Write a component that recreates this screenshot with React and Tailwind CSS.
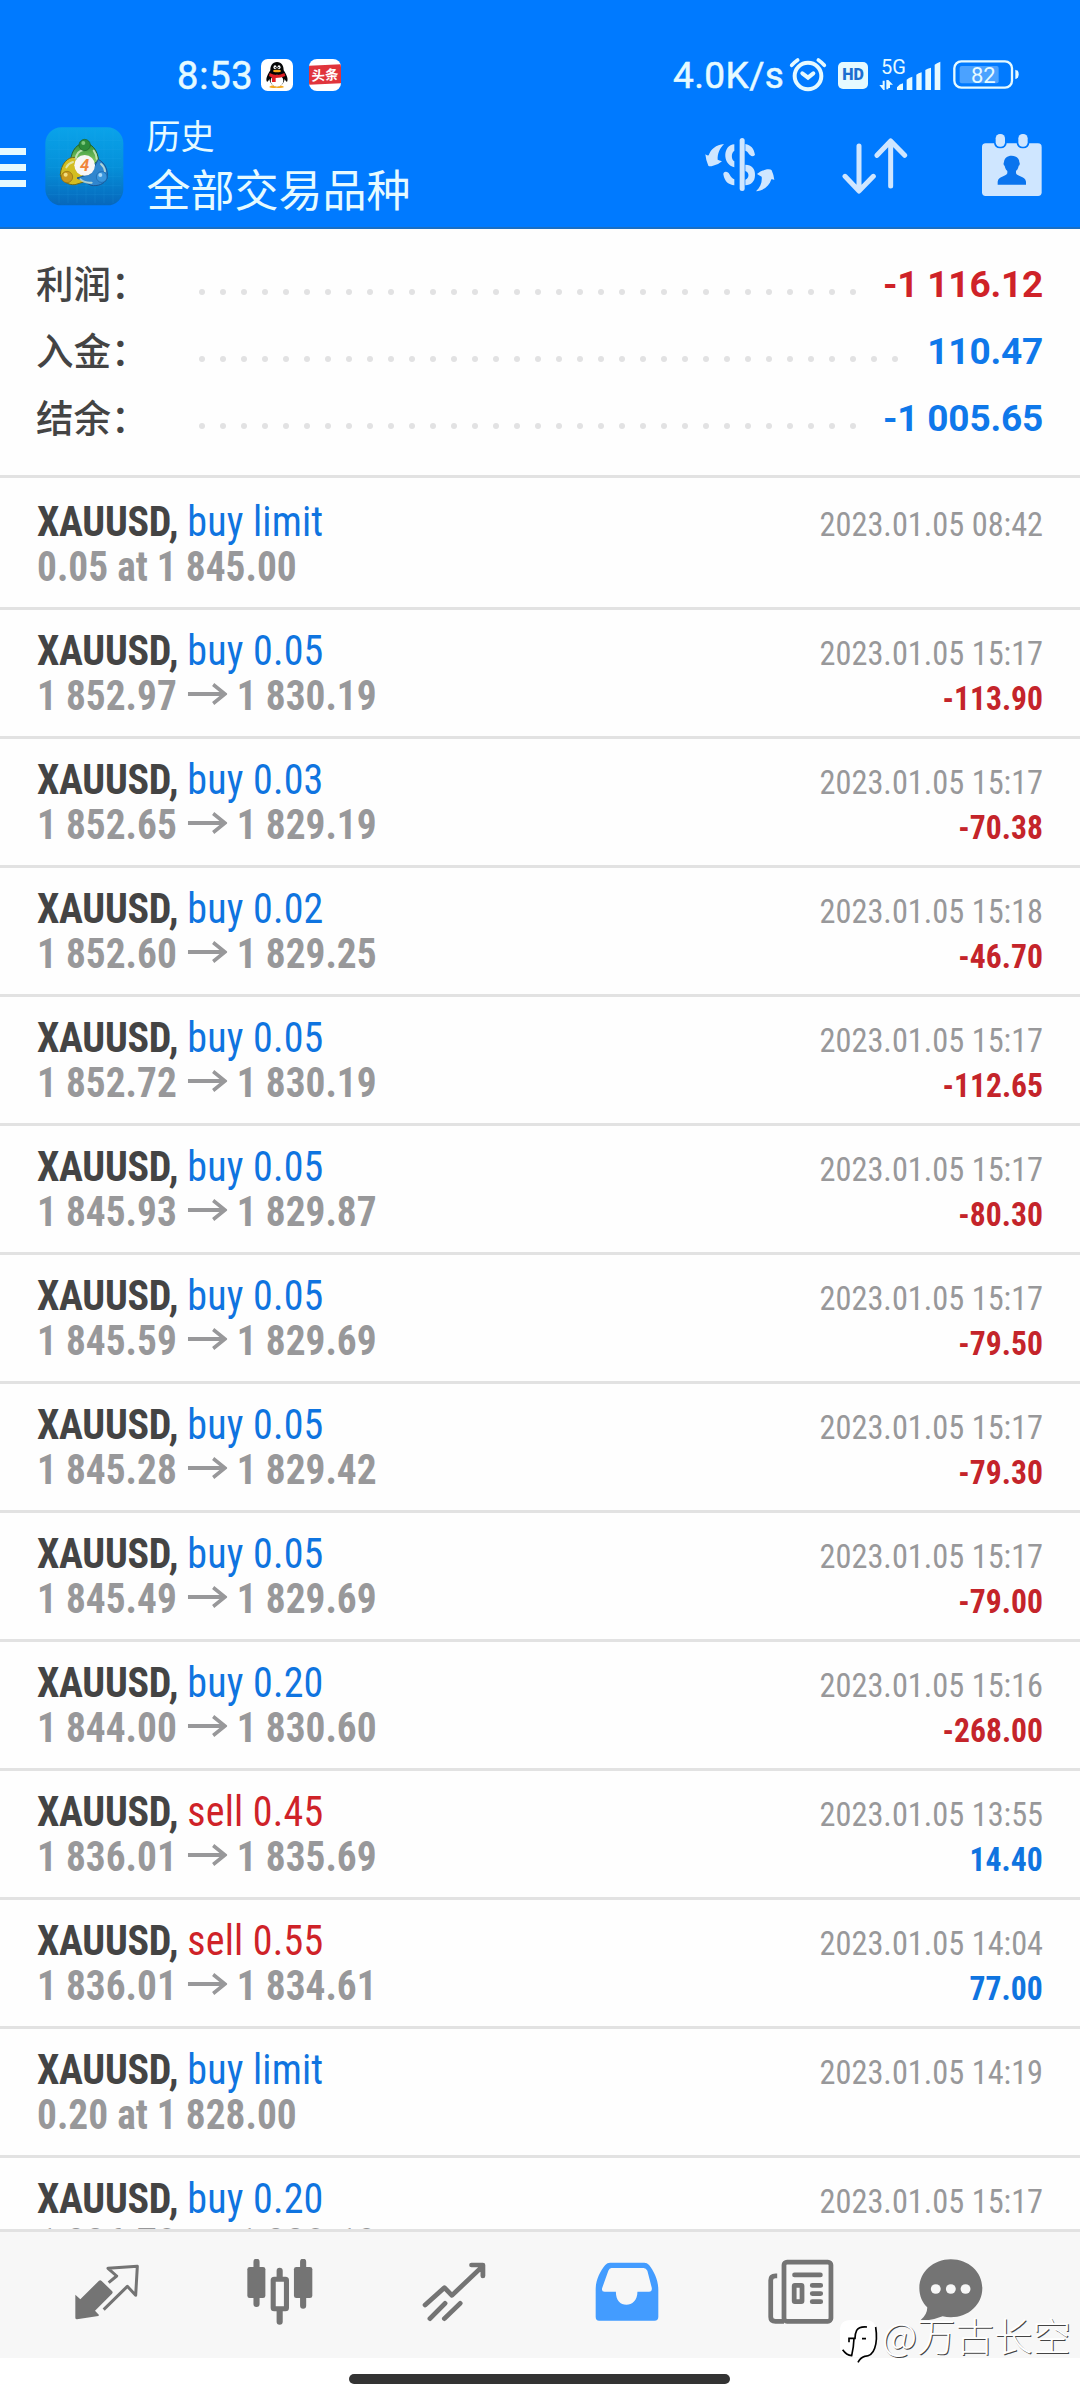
const RESUMEN = [
  { label: '利润', value: '-1 116.12', color: 'text-[#cf2228]', dots: 32 },
  { label: '入金', value: '110.47', color: 'text-[#0f78ea]', dots: 34 },
  { label: '结余', value: '-1 005.65', color: 'text-[#0f78ea]', dots: 32 },
];

const ORDERS = [
  { side: 'buy', size: 'limit', pending: '0.05 at 1 845.00', date: '2023.01.05 08:42' },
  { side: 'buy', size: '0.05', open: '1 852.97', close: '1 830.19', date: '2023.01.05 15:17', profit: '-113.90' },
  { side: 'buy', size: '0.03', open: '1 852.65', close: '1 829.19', date: '2023.01.05 15:17', profit: '-70.38' },
  { side: 'buy', size: '0.02', open: '1 852.60', close: '1 829.25', date: '2023.01.05 15:18', profit: '-46.70' },
  { side: 'buy', size: '0.05', open: '1 852.72', close: '1 830.19', date: '2023.01.05 15:17', profit: '-112.65' },
  { side: 'buy', size: '0.05', open: '1 845.93', close: '1 829.87', date: '2023.01.05 15:17', profit: '-80.30' },
  { side: 'buy', size: '0.05', open: '1 845.59', close: '1 829.69', date: '2023.01.05 15:17', profit: '-79.50' },
  { side: 'buy', size: '0.05', open: '1 845.28', close: '1 829.42', date: '2023.01.05 15:17', profit: '-79.30' },
  { side: 'buy', size: '0.05', open: '1 845.49', close: '1 829.69', date: '2023.01.05 15:17', profit: '-79.00' },
  { side: 'buy', size: '0.20', open: '1 844.00', close: '1 830.60', date: '2023.01.05 15:16', profit: '-268.00' },
  { side: 'sell', size: '0.45', open: '1 836.01', close: '1 835.69', date: '2023.01.05 13:55', profit: '14.40' },
  { side: 'sell', size: '0.55', open: '1 836.01', close: '1 834.61', date: '2023.01.05 14:04', profit: '77.00' },
  { side: 'buy', size: 'limit', pending: '0.20 at 1 828.00', date: '2023.01.05 14:19' },
  { side: 'buy', size: '0.20', open: '1 836.79', close: '1 830.19', date: '2023.01.05 15:17' },
];

// STATUS BAR
function QQIcon() {
  return (
    <svg width="32" height="32" viewBox="0 0 96 96">
      <rect width="96" height="96" rx="20" fill="#fff" />
      <path d="M24 84q10-8 22-3q12-5 24 3q-10 5-24 2q-14 3-22-2z" fill="#f5a81c" />
      <path d="M48 9C34 9 28 20 28 34c-8 12-14 24-11 33 2 3 6-2 8-7 2 12 10 22 23 22s21-10 23-22c2 5 6 10 8 7 3-9-3-21-11-33C68 20 62 9 48 9z" fill="#050505" />
      <ellipse cx="48" cy="65" rx="19" ry="18" fill="#fff" />
      <ellipse cx="42" cy="25" rx="4.500" ry="6" fill="#fff" />
      <ellipse cx="54" cy="25" rx="4.500" ry="6" fill="#fff" />
      <circle cx="43" cy="26" r="2" />
      <circle cx="53" cy="26" r="2" />
      <ellipse cx="48" cy="36" rx="12" ry="4" fill="#f5a81c" />
      <path d="M26 42q22 12 44 0l3 9q-12 6-29 6v12h-11V55q-6-2-9-4z" fill="#e01f26" />
    </svg>
  );
}

function ToutiaoIcon() {
  return (
    <div className="flex h-8 w-8 flex-col items-stretch justify-center overflow-hidden rounded-lg bg-white">
      <div className="-mt-px flex h-[19px] -skew-y-3 items-center justify-center bg-[#e0343c] font-['Noto_Sans_CJK_SC',sans-serif] text-[13.500px] leading-none font-bold text-white">头条</div>
    </div>
  );
}

function StatusBar() {
  return (
    <div className="flex h-[56px] items-center pl-[177px] font-['Roboto',sans-serif] text-[#e6faff]">
      <span className="mt-[2px] w-[84px] text-[38px] leading-[56px] tracking-[0.8px] [-webkit-text-stroke:0.5px_currentColor]">8:53</span>
      <QQIcon />
      <span className="w-4" />
      <ToutiaoIcon />
      <span className="mt-[2px] ml-[332px] w-[116px] text-[37px] leading-[56px] tracking-[0.4px] [-webkit-text-stroke:0.5px_currentColor]">4.0K/s</span>
      <svg width="38" height="36" viewBox="447 50 114 108" fill="none" stroke="currentColor" strokeWidth="12" strokeLinecap="round">
        <circle cx="504" cy="107" r="40" />
        <path d="M487 99l17 13 16-13" />
        <path d="M455 75q8-9 18-16M535 59q10 7 18 16" strokeWidth="11" />
      </svg>
      <span className="ml-[11px] flex h-[27px] w-[30px] items-center justify-center rounded-[5px] bg-current text-[16px] leading-none font-black">
        <span className="text-[#1d6fd0]">HD</span>
      </span>
      <div className="ml-[11px] flex h-[36px] w-[62px] flex-col">
        <span className="ml-[2px] text-[20px] leading-[20px]">5G</span>
        <svg className="-mt-[16px]" width="62" height="30" viewBox="716 60 186 90" fill="currentColor">
          <path d="M727 119h6v28h-4l-12-15h10zM738 117h6v28h-6zM744 117l14 14h-9v10h-7z" />
          <path d="M770 147v-8q8-10 18-12v20zM799 147v-31q6-6 17-9v40zM828 147v-46q6-4 16-7v53zM855 147V87q6-4 17-7v67zM883 147V71q6-5 17-9v85z" />
        </svg>
      </div>
      <svg className="ml-[12px]" width="66" height="30" viewBox="940 60 198 90" fill="none">
        <rect x="944" y="64" width="173" height="79" rx="21" stroke="currentColor" strokeWidth="7" />
        <rect x="960" y="78" width="117" height="52" rx="6" fill="#4ba2ff" />
        <path d="M1127 89q10 2 10 14t-10 14z" fill="currentColor" />
        <text x="1031" y="128" textAnchor="middle" fill="#e6faff" fontFamily="Roboto" fontWeight="400" fontSize="66">82</text>
      </svg>
    </div>
  );
}

// APP HEADER
function AppLogo() {
  return (
    <svg width="79" height="79" viewBox="28 21 237 237">
      <defs>
        <linearGradient id="bg" x1="0" y1="0" x2="0" y2="1">
          <stop offset="0" stopColor="#0aa3ea" />
          <stop offset="0.5" stopColor="#0591da" />
          <stop offset="1" stopColor="#0767bb" />
        </linearGradient>
        <linearGradient id="green" x1="0" y1="0" x2="0" y2="1">
          <stop offset="0" stopColor="#2f8f38" />
          <stop offset="1" stopColor="#8fd06a" />
        </linearGradient>
      </defs>
      <rect x="29" y="22" width="234" height="234" rx="48" fill="url(#bg)" />
      <path d="M70 30v220M97 30v220M124 30v220M151 30v220M178 30v220M205 30v220M232 30v220M36 62h220M36 89h220M36 116h220M36 143h220M36 170h220M36 197h220M36 224h220" stroke="#38b4f0" strokeOpacity="0.200" strokeWidth="2" />
      <path d="M105 122C108 88 126 70 147 70s38 18 42 52l-18 12-50 0z" fill="url(#green)" stroke="#24602c" strokeWidth="3" />
      <path d="M118 112C96 110 76 132 74 164c4 20 24 32 44 30l26-8-4-26z" fill="#d3bd22" stroke="#6d6a1a" strokeWidth="3" />
      <path d="M188 118c22 12 30 34 26 58-8 16-28 24-48 20l-42-22 40-12z" fill="#2f86cf" stroke="#1a5592" strokeWidth="3" />
      <path d="M120 116q4-22 22-26M92 142q6-12 20-16M196 132q10 8 12 22M134 178q14 12 34 10M174 92q8 10 9 24" stroke="#e6f5d8" strokeOpacity="0.700" strokeWidth="6" fill="none" strokeLinecap="round" />
      <circle cx="147" cy="75" r="17" fill="#2c8c3a" stroke="#1d6428" strokeWidth="2" />
      <circle cx="94" cy="171" r="17" fill="#c99a1e" stroke="#8d6c14" strokeWidth="2" />
      <circle cx="198" cy="171" r="16" fill="#3a96dc" stroke="#1a62a8" strokeWidth="2" />
      <circle cx="143" cy="69" r="6" fill="#7cc77a" />
      <circle cx="90" cy="164" r="6" fill="#f2de80" />
      <circle cx="194" cy="165" r="6" fill="#a5d8fa" />
      <circle cx="147" cy="136" r="31" fill="#f8f6f6" />
      <text x="147" y="153" textAnchor="middle" fontFamily="Roboto" fontWeight="700" fontStyle="italic" fontSize="50" fill="#f0853a">4</text>
    </svg>
  );
}

function Toolbar() {
  return (
    <div className="flex h-[124px] items-start">
      <div className="mt-[45px] flex w-[26px] flex-col gap-[9px]">
        <span className="h-[7px] bg-[#e6faff]" />
        <span className="h-[7px] bg-[#e6faff]" />
        <span className="h-[7px] bg-[#e6faff]" />
      </div>
      <div className="mt-[24px] ml-[18.500px]">
        <AppLogo />
      </div>
      <div className="ml-[23px] flex flex-col font-['Noto_Sans_CJK_SC',sans-serif] text-[#e6faff]">
        <span className="mt-[12px] text-[34px] leading-[40px]">历史</span>
        <span className="mt-[8px] text-[44px] leading-[50px]">全部交易品种</span>
      </div>
      {/* reverse, sort, period */}
      <div className="mt-[30px] mr-[37px] ml-auto flex items-start text-[#cfe6ff]">
        <svg className="mt-[4px]" width="70" height="56" viewBox="196 290 210 168" fill="currentColor">
          <path d="M284 312C250 313 246 372 284 381V363C274 357 274 337 284 331Z" />
          <path d="M317 311C333 314 343 324 346 344q-8 7-14 1C326 341 325 333 317 331Z" />
          <path d="M251 402c4 23 16 31 33 33v-18c-10-4-12-12-17-19-8-6-16-4-16 4z" />
          <path d="M317 373c20 0 30 13 29 31 0 20-12 30-29 31v-17c12-4 13-22 0-26z" />
          <rect x="300" y="293" width="15" height="159" rx="7.500" />
          <path d="M253 311c-24 2-40 16-46 34q-6 1-10-3 2 20 9 34 4 4 14 0 17-3 27-13-8-3-13-5c-1-18 6-34 19-47z" />
          <path d="M349 453c24-3 40-16 46-36q5-1 9 2-2-16-8-29-4-5-14-3-16 3-30 14 8 5 14 8c2 16-4 32-17 44z" />
        </svg>
        <svg className="mt-[4px] ml-[67px]" width="66" height="58" viewBox="609 290 198 174" fill="none" stroke="currentColor" strokeWidth="15" strokeLinecap="round" strokeLinejoin="round">
          <path d="M660 317v134M618 408l42 44 43-44" />
          <path d="M755 437V302M714 345l41-43 42 43" />
        </svg>
        <svg className="ml-[73px]" width="62" height="64" viewBox="1024 279 186 192" fill="currentColor">
          <rect x="1027" y="310" width="179" height="158" rx="11" />
          <rect x="1063" y="276" width="38" height="49" rx="17" fill="#007aff" />
          <rect x="1131" y="276" width="38" height="49" rx="17" fill="#007aff" />
          <rect x="1068" y="282" width="28" height="38" rx="13" />
          <rect x="1136" y="282" width="28" height="38" rx="13" />
          <path d="M1074 434v-9c2-16 24-14 29-25v-7c-6-5-7-12-8-16-4-2-4-8-2-10 0-12 10-20 23-20s23 8 23 20c2 2 2 8-2 10-1 4-2 11-8 16v7c5 11 28 9 30 25v9z" fill="#0a74ee" />
        </svg>
      </div>
    </div>
  );
}

function Resumen() {
  return (
    <div className="flex h-[246px] shrink-0 flex-col pt-[23px]">
      {RESUMEN.map((r) => (
        <div key={r.label} className="flex h-[67px] pr-[37px] pl-[36px]">
          <span className="w-[163px] font-['Noto_Sans_CJK_SC',sans-serif] text-[37.500px] leading-[60px] font-medium text-[#444]">{r.label}：</span>
          <div className="mt-[37px] flex gap-[15px]">
            {Array.from({ length: r.dots }, (_, i) => (
              <span key={i} className="h-[6px] w-[6px] rounded-full bg-[#e2e2e3]" />
            ))}
          </div>
          <span className={`ml-auto font-['Roboto',sans-serif] text-[37px] leading-[66px] font-bold tracking-[-0.2px] ${r.color}`}>{r.value}</span>
        </div>
      ))}
    </div>
  );
}

function Arrow() {
  return (
    <svg className="mr-[10px] mb-[5px] ml-[12px] inline-block align-baseline" width="42" height="22" viewBox="0 0 42 22" fill="none" stroke="currentColor" strokeWidth="3.800">
      <path d="M0 11h39M27 1.500L39.500 11L27 20.500" />
    </svg>
  );
}

function OrderRow({ order, first }) {
  return (
    <div className={`${first ? 'h-[132px] pt-[20.500px]' : 'h-[129px] pt-[17.500px]'} shrink-0 border-t-[3px] border-[#e2e2e2] px-[37px] font-['Roboto_Condensed',sans-serif] text-[42px] leading-[45px]`}>
      <div className="flex h-[45px] items-baseline justify-between">
        <span className="origin-left scale-x-[0.952]">
          <span className="font-bold tracking-[-0.3px] text-[#444]">XAUUSD,</span>{' '}
          <span className={`tracking-[0.2px] ${order.side === 'buy' ? 'text-[#0f74e0]' : 'text-[#cf2228]'}`}>{order.side} {order.size}</span>
        </span>
        <span className="origin-right scale-x-[0.951] text-[34px] text-[#98989a]">{order.date}</span>
      </div>
      <div className="flex h-[45px] items-baseline justify-between">
        <span className="origin-left scale-x-[0.937] font-bold whitespace-nowrap text-[#98989a]">
          {order.pending || (
            <>
              {order.open}
              <Arrow />
              {order.close}
            </>
          )}
        </span>
        {order.profit && (
          <span className={`origin-right scale-x-[0.930] text-[34px] font-bold ${order.profit.startsWith('-') ? 'text-[#c4242a]' : 'text-[#0f74e0]'}`}>{order.profit}</span>
        )}
      </div>
    </div>
  );
}

// BOTTOM NAVIGATION
function BottomNav() {
  return (
    <div className="flex h-[129px] shrink-0 border-t-[3px] border-[#e2e2e2] bg-[#f7f7f7] pt-[26px] pl-[21px] text-[#747474]">
      <div className="flex w-[172px] justify-center">
        <svg className="mt-[6px]" width="64" height="56" viewBox="48 46 192 168" fill="none" stroke="currentColor" strokeWidth="9">
          <path d="M49 138l15 14 56-56q4-3 8 1l31 30q4 4 0 8l-51 51 12 13-2 3-64 10q-5 0-5-5z" fill="currentColor" stroke="none" />
          <path d="M149 102l24-20-26-23 88-6-5 87-25-27-71 70" strokeLinejoin="round" />
        </svg>
      </div>
      <div className="flex w-[174px] justify-center">
        <svg className="mt-[1px]" width="66" height="66" viewBox="717 360 194 198" preserveAspectRatio="none" fill="currentColor">
          <path d="M745 368v127M882 368v132M813 395v30M813 510v38" stroke="currentColor" strokeWidth="18" strokeLinecap="round" />
          <rect x="718" y="384" width="53" height="93" rx="7" />
          <rect x="855" y="384" width="54" height="93" rx="7" />
          <rect x="794" y="421" width="39" height="88" rx="3" fill="#f7f7f7" stroke="currentColor" strokeWidth="15" />
        </svg>
      </div>
      <div className="flex w-[173px] justify-center">
        <svg className="mt-[4px]" width="64" height="60" viewBox="1223 367 186 180" preserveAspectRatio="none" fill="none" stroke="currentColor" strokeWidth="14" strokeLinecap="round" strokeLinejoin="round">
          <path d="M1232 496l56-52 22 23 88-86M1367 376h33v33M1246 537l44-46M1288 537l46-46" />
        </svg>
      </div>
      <div className="flex w-[174px] justify-center">
        <svg className="mt-[4px]" width="64" height="60" viewBox="160 367 187 180" preserveAspectRatio="none">
          <path
            fillRule="evenodd"
            fill="#439cff"
            d="M162 450C162 420 175 395 190 376Q196 369 204 369H304Q312 369 318 376C332 395 345 420 345 450V532Q345 543 334 543H172Q162 543 162 532ZM208 385H302Q309 385 313 393L326 445Q327 456 318 456H284C284 482 268 495 252 495C234 495 221 482 221 456H188Q178 456 181 445L199 393Q202 385 208 385Z"
          />
        </svg>
      </div>
      <div className="flex w-[174px] justify-center">
        <svg className="mt-[1px]" width="66" height="66" viewBox="663 359 194 195" preserveAspectRatio="none" fill="none" stroke="currentColor" strokeWidth="14" strokeLinecap="round">
          <rect x="710" y="368" width="138" height="175" rx="9" />
          <path d="M690 409h-5q-14 0-14 13v108q0 13 14 13h25" strokeLinecap="butt" />
          <path d="M741 406h76M793 437h25M793 461h25M793 485h25" />
          <rect x="740" y="437" width="23" height="48" rx="2" />
        </svg>
      </div>
      <div className="flex w-[126px] justify-center">
        <svg className="mt-[1px]" width="64" height="62" viewBox="1100 360 187 186" preserveAspectRatio="none" fill="currentColor">
          <path d="M1193 361c52 0 92 38 92 87s-40 87-92 87q-12 0-24-3-20 8-40 11h-24q20-18 19-38c-14-14-23-34-23-57 0-49 41-87 92-87z" />
          <g fill="#f7f7f7">
            <circle cx="1149" cy="450" r="14.500" />
            <circle cx="1193" cy="450" r="14.500" />
            <circle cx="1236" cy="450" r="14.500" />
          </g>
        </svg>
      </div>
    </div>
  );
}

function Watermark() {
  return (
    <div className="absolute top-[2309px] right-[9px] flex items-start">
      <svg className="mt-[8px]" width="42" height="47" viewBox="60 54 126 141">
        <path d="M92 63h46q30 0 30 30v42q0 32-28 38l-26 16 6-14H94q-34 0-34-34V94q0-31 32-31z" fill="#fff" />
        <path d="M167 84q6 38-3 64-8 24-30 24-13 4-20 18" fill="none" stroke="#000" strokeWidth="5" />
        <path d="M141 84q-24-2-31 10-5 10-5 24H87v12M102 118q-1 28-7 52-16-2-27-18M126 119h12" fill="none" stroke="#000" strokeWidth="5" />
      </svg>
      <span className="font-['Noto_Sans_CJK_SC',sans-serif] text-[38.500px] leading-[50px] font-light text-white [text-shadow:1px_1px_0_#444]">@万古长空</span>
    </div>
  );
}

function App() {
  return (
    <div className="relative flex h-[2400px] w-[1080px] flex-col overflow-hidden bg-[#fefefe]">
      <header className="flex h-[229px] shrink-0 flex-col border-b-2 border-[#1a6fc4] bg-[#007aff] pt-[47px]">
        <StatusBar />
        <Toolbar />
      </header>
      <Resumen />
      <main className="flex min-h-0 flex-1 flex-col overflow-hidden">
        {ORDERS.map((order, i) => (
          <OrderRow key={i} order={order} first={i === 0} />
        ))}
      </main>
      <BottomNav />
      <div className="flex h-[42px] shrink-0 bg-white pt-[16px] pl-[349px]">
        <span className="h-[10px] w-[381px] rounded-full bg-[#333]" />
      </div>
      <Watermark />
    </div>
  );
}

export default App;
